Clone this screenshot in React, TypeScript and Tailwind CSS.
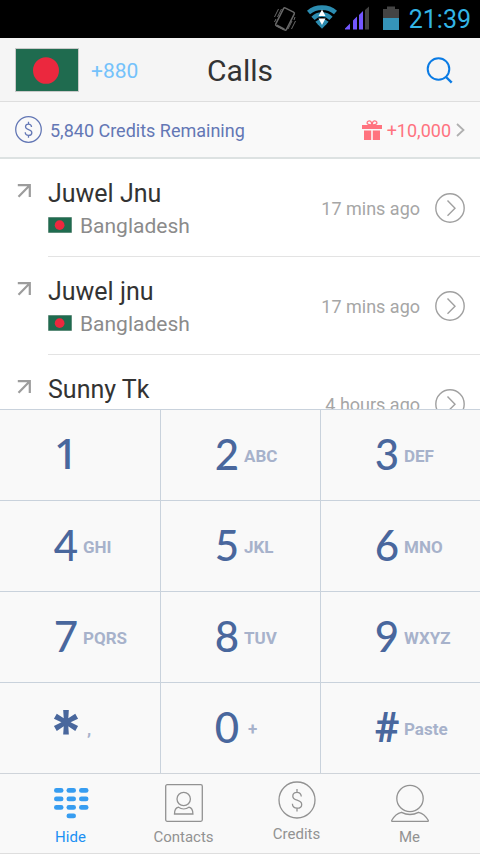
import clsx from "clsx";

const calls = [
  { name: "Juwel Jnu", country: "Bangladesh", time: "17 mins ago" },
  { name: "Juwel jnu", country: "Bangladesh", time: "17 mins ago" },
  { name: "Sunny Tk", country: "Bangladesh", time: "4 hours ago" },
];

const keys = [
  { digit: "1", letters: "" },
  { digit: "2", letters: "ABC" },
  { digit: "3", letters: "DEF" },
  { digit: "4", letters: "GHI" },
  { digit: "5", letters: "JKL" },
  { digit: "6", letters: "MNO" },
  { digit: "7", letters: "PQRS" },
  { digit: "8", letters: "TUV" },
  { digit: "9", letters: "WXYZ" },
  { digit: "*", letters: "," },
  { digit: "0", letters: "+" },
  { digit: "#", letters: "Paste" },
];

const digitFont = (digit: string) => {
  if (digit === "1") return "font-['Noto_Sans','Open_Sans',sans-serif] text-[42px] font-medium pb-1";
  if (digit === "*") return "font-['Inter',sans-serif] text-[60px] font-bold pt-2";
  if (digit === "#") return "font-['Roboto',sans-serif] text-[42px] font-bold";
  return "font-['Lato',sans-serif] text-[42px] font-medium pb-0.5";
};

const Flag = ({ className }: { className?: string }) => (
  <svg viewBox="0 0 64 43" preserveAspectRatio="none" className={className} aria-hidden="true">
    <rect width="64" height="43" fill="#c9c9c9" />
    <rect x="1" y="1" width="62" height="41" fill="#1f6b4f" />
    <circle cx="31" cy="22" r="13" fill="#eb283e" />
  </svg>
);

const DollarIcon = ({ className, stroke }: { className?: string; stroke: number }) => (
  <svg viewBox="0 0 38 38" className={className} fill="none" stroke="currentColor" strokeWidth={stroke} aria-hidden="true">
    <circle cx="19" cy="19" r="18" />
    <path d="M19 8v3.200M19 27v3.500M23.300 15.500c-.2-2.600-1.900-4.200-4.300-4.200s-4.200 1.500-4.200 3.900c0 2.600 2 3.300 4.300 4 2.600.8 4.600 1.700 4.600 4.200 0 2.300-1.900 3.800-4.500 3.800-2.700 0-4.700-1.600-4.800-4.400" />
  </svg>
);

const StatusBar = () => (
  <div className="flex h-[38px] items-center justify-end bg-black pr-[9px] text-[#33b5e5]">
    <svg viewBox="0 0 24 28" className="mr-2.5 h-7 w-6" fill="none" stroke="#686868" aria-hidden="true">
      <rect x="6" y="4" width="12" height="20" rx="1.500" strokeWidth="1.500" transform="rotate(27 12 14)" />
      <path d="M3.800 20.500l7.500 3.800" strokeWidth="2" />
      <path d="M1.500 12l4-8M4.500 12l4-8M1.500 17l1.500-3M15 24l4-8M18.500 24l4-8M21 15l1-3" strokeWidth="1" />
    </svg>
    <svg viewBox="0 0 30 24" className="mr-2 mb-1 h-6 w-[30px]" aria-hidden="true">
      <g fill="none" stroke="#2c8cb0" strokeWidth="4.600">
        <path d="M1.500 7.500C9 1 21 1 28.500 7.500" />
        <path d="M6 13.300c5-5 13-5 18 0" />
        <path d="M10 18.500c3-3 7-3 10 0" />
      </g>
      <path d="M10.500 19h9L15 23.800z" fill="#2c8cb0" />
      <path d="M15 4.500l3.500 6.500h-7zM11.500 13.500h7L15 20z" fill="#fff" />
    </svg>
    <svg viewBox="0 0 24 24" className="mr-3.5 mb-0.5 h-6 w-6" aria-hidden="true">
      <path d="M0 23.500v-1l5-5v6zM8 23.500v-9l4-4v13zM14 23.500V9l4-4v18.500z" fill="#7357ff" />
      <path d="M20 23.500V4l4-3.500v23z" fill="#424242" />
    </svg>
    <svg viewBox="0 0 16 24" className="mr-2.5 mb-0.5 h-6 w-4" aria-hidden="true">
      <path d="M0 3h4V.5h8V3h4v9H0z" fill="#444" />
      <path d="M0 12h16v12H0z" fill="#3594b9" />
    </svg>
    <span className="pt-0.5 text-[25px] leading-9">21:39</span>
  </div>
);

const Header = () => (
  <header className="grid h-16 grid-cols-3 items-center border-b border-[#dedede] bg-[#f5f5f5] px-[15px]">
    <button type="button" className="flex items-center gap-3 text-[21px] text-[#74c2fb]">
      <Flag className="h-11 w-16" />
      <span className="pt-1">+880</span>
    </button>
    <h1 className="pt-0.5 text-center text-[30px] leading-9 text-[#333]">Calls</h1>
    <button type="button" aria-label="Search" className="mr-3 justify-self-end">
      <svg viewBox="0 0 28 28" className="h-7 w-7" fill="none" stroke="#0a7be4" strokeWidth="2" aria-hidden="true">
        <circle cx="13.500" cy="13" r="10.800" />
        <path d="M20.500 20.500l6.200 6.200" strokeWidth="2.400" />
      </svg>
    </button>
  </header>
);

const CreditsBar = () => (
  <div className="flex h-[57px] items-center justify-between border-b-2 border-[#dde2e2] bg-[#f9f9f9] px-[15px]">
    <div className="flex items-center gap-2 text-[18px] text-[#6377b5]">
      <DollarIcon className="h-[27px] w-[27px]" stroke={1.8} />
      <span className="pt-0.5">5,840 Credits Remaining</span>
    </div>
    <a href="#credits" className="flex items-center gap-[5px] text-[18px] text-[#ff737f]">
      <svg viewBox="0 0 20 20" className="h-5 w-5" fill="currentColor" aria-hidden="true">
        <path d="M0 5h20v4H0zM2 10.500h7.200V20H2zM10.800 10.500H18V20h-7.200z" />
        <path d="M9.800 5C5.500 5 4.500 3.500 5.300 2S8.600.3 9.300 2.300L10 5zM10.200 5c4.300 0 5.300-1.500 4.500-3s-3.300-1.700-4 .3L10 5z" fill="none" stroke="currentColor" strokeWidth="1.300" />
      </svg>
      <span className="pt-0.5">+10,000</span>
      <svg viewBox="0 0 9 14" className="h-3.5 w-[9px]" fill="none" stroke="#b0b0b0" strokeWidth="1.800" aria-hidden="true">
        <path d="M1 1l6.500 6L1 13" />
      </svg>
    </a>
  </div>
);

const CallRow = ({ name, country, time }: { name: string; country: string; time: string }) => (
  <li className="flex h-[98px] pl-[17px]">
    <svg viewBox="0 0 14 14" className="mt-[25px] mr-[17px] h-3.5 w-3.5 shrink-0" fill="none" stroke="#9c9c9c" strokeWidth="2.200" aria-hidden="true">
      <path d="M0.800 1.200h12V13M12.500 1.500L1.500 12.800" />
    </svg>
    <div className="flex flex-1 items-center justify-between border-b border-[#e3e3e3] pr-[15px]">
      <div className="pt-1">
        <div className="text-[25px] leading-8 text-[#333]">{name}</div>
        <div className="flex items-center gap-2 text-[21px] leading-8 text-[#8b8b8b]">
          <Flag className="mb-0.5 h-4 w-6" />
          {country}
        </div>
      </div>
      <div className="flex items-center gap-[15px] text-[18px] text-[#a6a6a6]">
        <span className="pt-0.5">{time}</span>
        <button type="button" aria-label={`Details for ${name}`}>
          <svg viewBox="0 0 30 30" className="block h-[30px] w-[30px]" fill="none" stroke="#a0a0a0" strokeWidth="1.400" aria-hidden="true">
            <circle cx="15" cy="15" r="14.200" />
            <path d="M12.500 7.500l7.500 7.700-7.500 7.500" />
          </svg>
        </button>
      </div>
    </div>
  </li>
);

const Keypad = () => (
  <div className="grid grid-cols-3 bg-[#f9f9f9]">
    {keys.map(({ digit, letters }, i) => (
      <button
        key={digit}
        type="button"
        className={clsx(
          "flex h-[91px] items-center gap-[3px] border-t border-[#c9d2dc] pl-[52px]",
          i % 3 !== 0 && "border-l"
        )}
      >
        <span className={clsx("flex w-7 justify-center leading-none text-[#49679d]", digitFont(digit))}>{digit}</span>
        <span className={clsx("pt-1 text-[17px] font-bold text-[#a7b2cb]", letters.length === 1 && "pl-1")}>{letters}</span>
      </button>
    ))}
  </div>
);

const TabBar = () => (
  <nav className="grid h-[81px] grid-cols-4 border-y border-[#cfd4da] border-b-[#dedede] bg-[#f9f9f9] px-[14px] text-[15px] leading-5 text-[#929292]">
    <a href="#hide" className="flex flex-col items-center gap-[5px] pt-2.5 text-[#1c90f3]">
      <svg viewBox="0 0 38 38" className="h-[38px] w-[38px]" fill="#379df1" aria-hidden="true">
        {[4, 12.5, 21].map((y) =>
          [2, 14.5, 27].map((x) => <rect key={`${x}-${y}`} x={x} y={y} width="9.500" height="4.800" rx="2.400" />)
        )}
        <rect x="14.500" y="29.500" width="9.500" height="4.800" rx="2.400" />
      </svg>
      Hide
    </a>
    <a href="#contacts" className="flex flex-col items-center gap-[5px] pt-2.5">
      <svg viewBox="0 0 38 38" className="h-[38px] w-[38px]" fill="none" stroke="#929292" strokeWidth="1.300" aria-hidden="true">
        <rect x="0.700" y="0.700" width="36.600" height="36.600" rx="1.500" />
        <circle cx="18.700" cy="15" r="6.700" />
        <path d="M13.500 23.200c-2.700.6-4 3-4 6.800h18.400c0-3.800-1.300-6.200-4-6.800-3 2.200-7.400 2.200-10.400 0z" />
      </svg>
      Contacts
    </a>
    <a href="#credits" className="flex flex-col items-center gap-[5px] pt-[7px]">
      <DollarIcon className="h-[38px] w-[38px]" stroke={1.3} />
      Credits
    </a>
    <a href="#me" className="flex flex-col items-center gap-[5px] pt-2.5">
      <svg viewBox="0 0 38 38" className="h-[38px] w-[38px]" fill="none" stroke="#929292" strokeWidth="1.300" aria-hidden="true">
        <circle cx="19" cy="14.500" r="13.200" />
        <path d="M10.500 28.300c-4 .9-7.500 4-9.700 8-.3.800 0 1.200.8 1.200h34.800c.8 0 1.100-.4.800-1.200-2.200-4-5.700-7.100-9.700-8-5.200 2.700-11.800 2.700-17 0z" />
      </svg>
      Me
    </a>
  </nav>
);

export default function App() {
  return (
    <div className="flex h-screen flex-col bg-[#f9f9f9] font-['Roboto',sans-serif]">
      <StatusBar />
      <Header />
      <CreditsBar />
      <ul className="min-h-0 flex-1 overflow-hidden bg-white">
        {calls.map((call) => (
          <CallRow key={call.name} {...call} />
        ))}
      </ul>
      <Keypad />
      <TabBar />
    </div>
  );
}
